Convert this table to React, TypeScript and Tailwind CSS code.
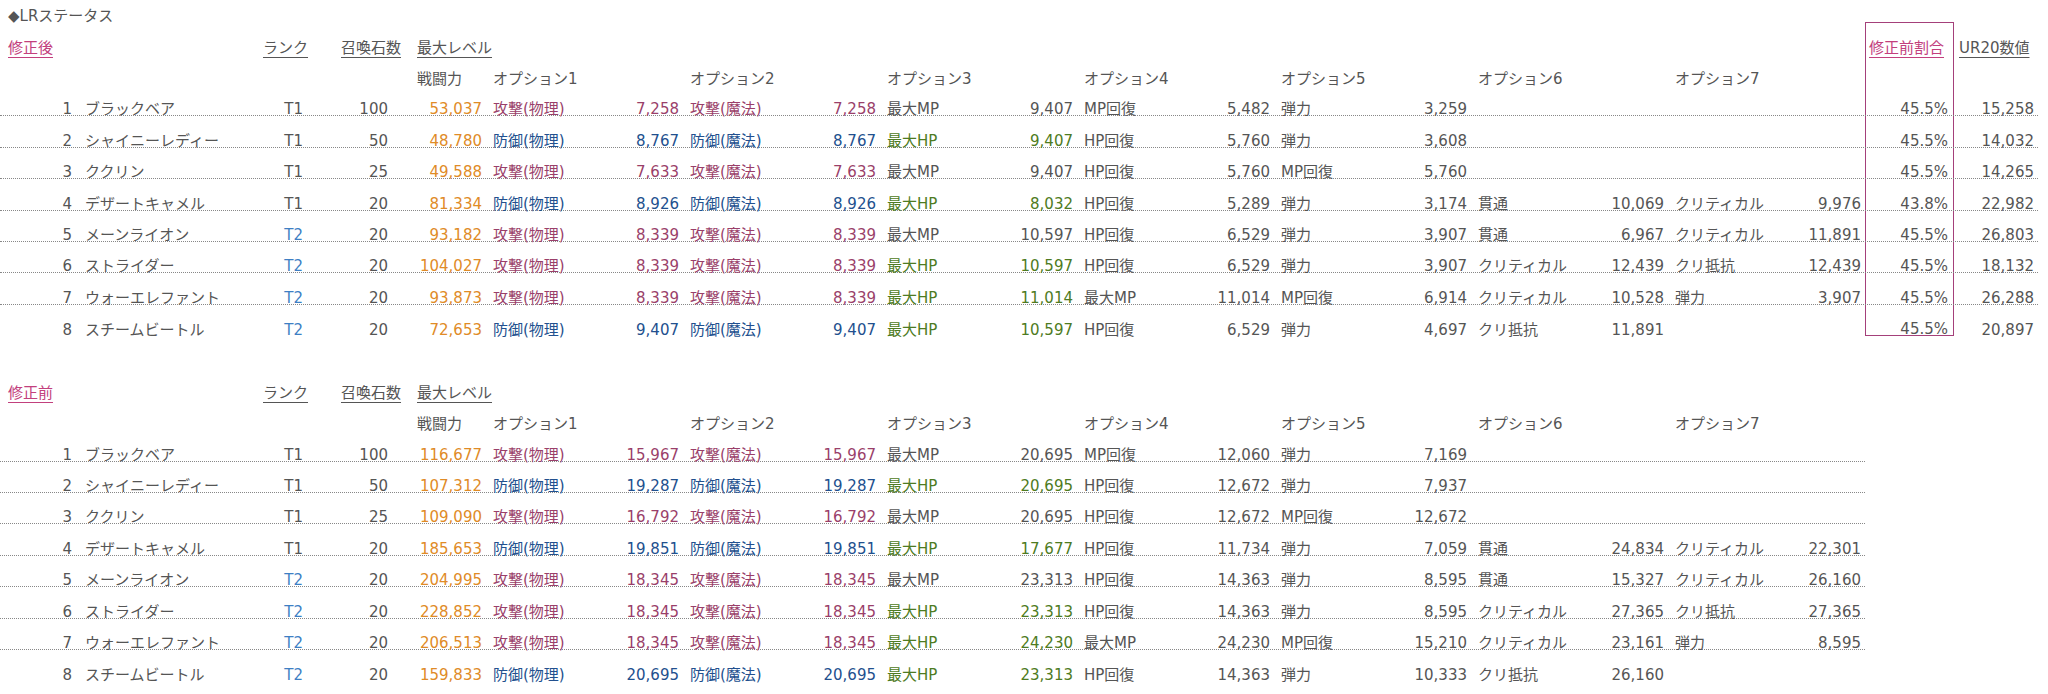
import React from 'react';

type Opt = [string, string];
type Row = {
  no: number;
  name: string;
  rank: string;
  stones: string;
  power: string;
  opts: Opt[];
  ratio?: string;
  ur20?: string;
};

const after: Row[] = [
  { no: 1, name: 'ブラックベア', rank: 'T1', stones: '100', power: '53,037', opts: [['攻撃(物理)', '7,258'], ['攻撃(魔法)', '7,258'], ['最大MP', '9,407'], ['MP回復', '5,482'], ['弾力', '3,259']], ratio: '45.5%', ur20: '15,258' },
  { no: 2, name: 'シャイニーレディー', rank: 'T1', stones: '50', power: '48,780', opts: [['防御(物理)', '8,767'], ['防御(魔法)', '8,767'], ['最大HP', '9,407'], ['HP回復', '5,760'], ['弾力', '3,608']], ratio: '45.5%', ur20: '14,032' },
  { no: 3, name: 'ククリン', rank: 'T1', stones: '25', power: '49,588', opts: [['攻撃(物理)', '7,633'], ['攻撃(魔法)', '7,633'], ['最大MP', '9,407'], ['HP回復', '5,760'], ['MP回復', '5,760']], ratio: '45.5%', ur20: '14,265' },
  { no: 4, name: 'デザートキャメル', rank: 'T1', stones: '20', power: '81,334', opts: [['防御(物理)', '8,926'], ['防御(魔法)', '8,926'], ['最大HP', '8,032'], ['HP回復', '5,289'], ['弾力', '3,174'], ['貫通', '10,069'], ['クリティカル', '9,976']], ratio: '43.8%', ur20: '22,982' },
  { no: 5, name: 'メーンライオン', rank: 'T2', stones: '20', power: '93,182', opts: [['攻撃(物理)', '8,339'], ['攻撃(魔法)', '8,339'], ['最大MP', '10,597'], ['HP回復', '6,529'], ['弾力', '3,907'], ['貫通', '6,967'], ['クリティカル', '11,891']], ratio: '45.5%', ur20: '26,803' },
  { no: 6, name: 'ストライダー', rank: 'T2', stones: '20', power: '104,027', opts: [['攻撃(物理)', '8,339'], ['攻撃(魔法)', '8,339'], ['最大HP', '10,597'], ['HP回復', '6,529'], ['弾力', '3,907'], ['クリティカル', '12,439'], ['クリ抵抗', '12,439']], ratio: '45.5%', ur20: '18,132' },
  { no: 7, name: 'ウォーエレファント', rank: 'T2', stones: '20', power: '93,873', opts: [['攻撃(物理)', '8,339'], ['攻撃(魔法)', '8,339'], ['最大HP', '11,014'], ['最大MP', '11,014'], ['MP回復', '6,914'], ['クリティカル', '10,528'], ['弾力', '3,907']], ratio: '45.5%', ur20: '26,288' },
  { no: 8, name: 'スチームビートル', rank: 'T2', stones: '20', power: '72,653', opts: [['防御(物理)', '9,407'], ['防御(魔法)', '9,407'], ['最大HP', '10,597'], ['HP回復', '6,529'], ['弾力', '4,697'], ['クリ抵抗', '11,891']], ratio: '45.5%', ur20: '20,897' },
];

const before: Row[] = [
  { no: 1, name: 'ブラックベア', rank: 'T1', stones: '100', power: '116,677', opts: [['攻撃(物理)', '15,967'], ['攻撃(魔法)', '15,967'], ['最大MP', '20,695'], ['MP回復', '12,060'], ['弾力', '7,169']] },
  { no: 2, name: 'シャイニーレディー', rank: 'T1', stones: '50', power: '107,312', opts: [['防御(物理)', '19,287'], ['防御(魔法)', '19,287'], ['最大HP', '20,695'], ['HP回復', '12,672'], ['弾力', '7,937']] },
  { no: 3, name: 'ククリン', rank: 'T1', stones: '25', power: '109,090', opts: [['攻撃(物理)', '16,792'], ['攻撃(魔法)', '16,792'], ['最大MP', '20,695'], ['HP回復', '12,672'], ['MP回復', '12,672']] },
  { no: 4, name: 'デザートキャメル', rank: 'T1', stones: '20', power: '185,653', opts: [['防御(物理)', '19,851'], ['防御(魔法)', '19,851'], ['最大HP', '17,677'], ['HP回復', '11,734'], ['弾力', '7,059'], ['貫通', '24,834'], ['クリティカル', '22,301']] },
  { no: 5, name: 'メーンライオン', rank: 'T2', stones: '20', power: '204,995', opts: [['攻撃(物理)', '18,345'], ['攻撃(魔法)', '18,345'], ['最大MP', '23,313'], ['HP回復', '14,363'], ['弾力', '8,595'], ['貫通', '15,327'], ['クリティカル', '26,160']] },
  { no: 6, name: 'ストライダー', rank: 'T2', stones: '20', power: '228,852', opts: [['攻撃(物理)', '18,345'], ['攻撃(魔法)', '18,345'], ['最大HP', '23,313'], ['HP回復', '14,363'], ['弾力', '8,595'], ['クリティカル', '27,365'], ['クリ抵抗', '27,365']] },
  { no: 7, name: 'ウォーエレファント', rank: 'T2', stones: '20', power: '206,513', opts: [['攻撃(物理)', '18,345'], ['攻撃(魔法)', '18,345'], ['最大HP', '24,230'], ['最大MP', '24,230'], ['MP回復', '15,210'], ['クリティカル', '23,161'], ['弾力', '8,595']] },
  { no: 8, name: 'スチームビートル', rank: 'T2', stones: '20', power: '159,833', opts: [['防御(物理)', '20,695'], ['防御(魔法)', '20,695'], ['最大HP', '23,313'], ['HP回復', '14,363'], ['弾力', '10,333'], ['クリ抵抗', '26,160']] },
];

const optColor = (name: string) => {
  if (name.startsWith('攻撃')) return 'text-[#9a3f6a]';
  if (name.startsWith('防御')) return 'text-[#22508e]';
  if (name === '最大HP') return 'text-[#4e7b22]';
  return 'text-[#555]';
};

// the pink frame around the 修正前割合 column
const Ratio = ({ children, top, bottom }: { children?: React.ReactNode; top?: boolean; bottom?: boolean }) => (
  <div
    className={`w-[89px] shrink-0 self-stretch flex items-end justify-end pr-[5px] border-x border-[#a4407a] ${top ? 'border-t' : ''} ${bottom ? 'border-b' : ''}`}
  >
    {children}
  </div>
);

// text sits just on the dotted line, like the spreadsheet it came from
const rowCls = 'flex items-end h-[31.4px] leading-[11px]';

const DataRow = ({ r, last, wide }: { r: Row; last: boolean; wide: boolean }) => {
  const cells: (Opt | undefined)[] = Array.from({ length: 7 }, (_, i) => r.opts[i]);
  return (
    <div className={`${rowCls} ${last ? '' : 'border-b border-dotted border-[#888]'}`}>
      <div className="w-[76px] shrink-0 text-right pr-[4px]">{r.no}</div>
      <div className="w-[154px] shrink-0 pl-[9px] whitespace-nowrap">{r.name}</div>
      <div className={`w-[77px] shrink-0 text-right pr-[4px] ${r.rank === 'T2' ? 'text-[#3e7fc4]' : ''}`}>{r.rank}</div>
      <div className="w-[85px] shrink-0 text-right pr-[4px]">{r.stones}</div>
      <div className="w-[94px] shrink-0 text-right pr-[4px] text-[#e08b27]">{r.power}</div>
      {cells.map((o, i) => (
        <React.Fragment key={i}>
          <div className={`w-[100px] shrink-0 pl-[7px] whitespace-nowrap ${o ? optColor(o[0]) : ''}`}>{o ? o[0] : ''}</div>
          <div className={`w-[97px] shrink-0 text-right pr-[4px] ${o ? optColor(o[0]) : ''}`}>{o ? o[1] : ''}</div>
        </React.Fragment>
      ))}
      {wide && (
        <>
          <Ratio bottom={last}>{r.ratio}</Ratio>
          <div className="w-[84px] shrink-0 text-right pr-[4px]">{r.ur20}</div>
        </>
      )}
    </div>
  );
};

const Table = ({ label, rows, wide }: { label: string; rows: Row[]; wide: boolean }) => (
  <div className={wide ? 'w-[2038px]' : 'w-[1865px]'}>
    <div className={rowCls}>
      <div className="w-[260px] shrink-0 pl-[8px]">
        <span className="underline underline-offset-[4px] text-[#c2407d]">{label}</span>
      </div>
      <div className="w-[78px] shrink-0 pl-[3px]">
        <span className="underline underline-offset-[4px]">ランク</span>
      </div>
      <div className="w-[76px] shrink-0 pl-[3px]">
        <span className="underline underline-offset-[4px]">召喚石数</span>
      </div>
      <div className="w-[1451px] shrink-0 pl-[3px]">
        <span className="underline underline-offset-[4px]">最大レベル</span>
      </div>
      {wide && (
        <>
          <Ratio top>
            <span className="underline underline-offset-[4px] text-[#c2407d] w-full pl-[3px]">修正前割合</span>
          </Ratio>
          <div className="w-[84px] shrink-0 pl-[5px] whitespace-nowrap">
            <span className="underline underline-offset-[4px]">UR20数値</span>
          </div>
        </>
      )}
    </div>
    <div className={rowCls}>
      <div className="w-[414px] shrink-0" />
      <div className="w-[72px] shrink-0 pl-[3px]">戦闘力</div>
      {[1, 2, 3, 4, 5, 6, 7].map((n) => (
        <div key={n} className="w-[197px] shrink-0 pl-[7px]">オプション{n}</div>
      ))}
      {wide && (
        <>
          <Ratio />
          <div className="w-[84px] shrink-0" />
        </>
      )}
    </div>
    {rows.map((r, i) => (
      <DataRow key={r.no} r={r} last={i === rows.length - 1} wide={wide} />
    ))}
  </div>
);

export default function App() {
  return (
    <div className="w-[2048px] h-[694px] bg-white overflow-hidden text-[15px] text-[#555] font-['DejaVu_Sans','Noto_Sans_CJK_JP',sans-serif]">
      <div className="flex items-end h-[22.2px] leading-[11px] pl-[8px]">◆LRステータス</div>
      <Table label="修正後" rows={after} wide />
      <div className="h-[31.4px]" />
      <Table label="修正前" rows={before} wide={false} />
    </div>
  );
}
